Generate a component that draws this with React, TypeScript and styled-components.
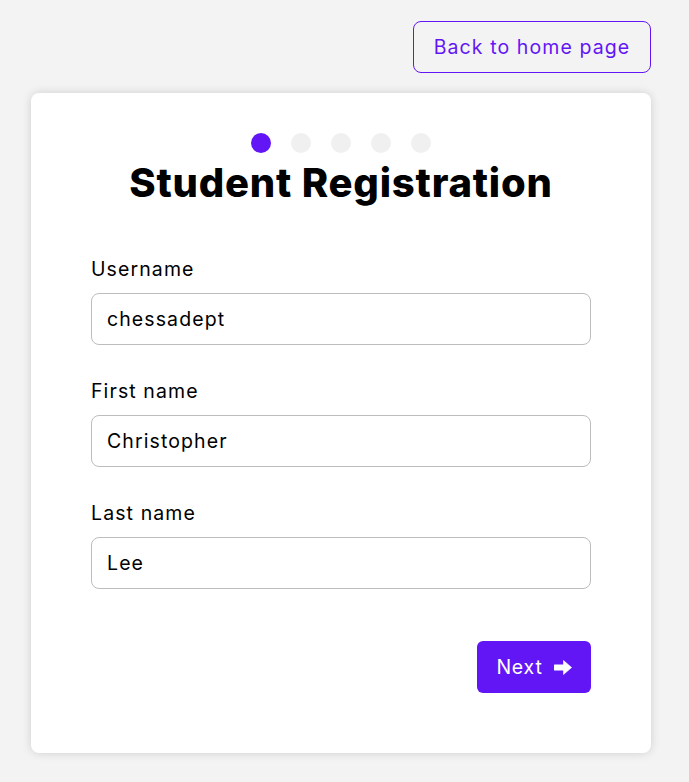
import { useState } from 'react'
import styled, { createGlobalStyle } from 'styled-components'

const GlobalStyle = createGlobalStyle`
  html, body {
    margin: 0;
    padding: 0;
    background: #f3f3f3;
    font-family: 'Inter', 'Noto Sans', sans-serif;
  }
  * { box-sizing: border-box; }
`

const fields = [
  { id: 'username', label: 'Username', value: 'chessadept' },
  { id: 'firstName', label: 'First name', value: 'Christopher' },
  { id: 'lastName', label: 'Last name', value: 'Lee' }
]

const ArrowIcon = () => (
  <svg width='18' height='15' viewBox='0 0 18 15' fill='currentColor'>
    <rect x='0' y='4.5' width='10.5' height='6' rx='0.5' />
    <path d='M9.5 0.5 L17.6 7.5 L9.5 14.5 Z' strokeLinejoin='round' stroke='currentColor' strokeWidth='0.6' />
  </svg>
)

export default function App() {
  const [values, setValues] = useState<Record<string, string>>(
    Object.fromEntries(fields.map(f => [f.id, f.value]))
  )
  const step = 0

  return (
    <Page>
      <GlobalStyle />
      <TopBar>
        <BackButton>Back to home page</BackButton>
      </TopBar>
      <Card>
        <Dots>
          {[0, 1, 2, 3, 4].map(i => (
            <Dot key={i} $active={i === step} />
          ))}
        </Dots>
        <Title>Student Registration</Title>
        <Form>
          {fields.map(f => (
            <Field key={f.id}>
              <Label htmlFor={f.id}>{f.label}</Label>
              <Input
                id={f.id}
                value={values[f.id]}
                onChange={e => setValues({ ...values, [f.id]: e.target.value })}
              />
            </Field>
          ))}
        </Form>
        <Actions>
          <NextButton>
            Next <ArrowIcon />
          </NextButton>
        </Actions>
      </Card>
    </Page>
  )
}

const Page = styled.div`
  width: 689px;
  min-height: 782px;
  padding: 21px 38px 29px 31px;
  display: flex;
  flex-direction: column;
  gap: 20px;
`

const TopBar = styled.div`
  display: flex;
  justify-content: flex-end;
`

const BackButton = styled.button`
  height: 52px;
  width: 238px;
  padding: 0;
  border: 1px solid #6316f5;
  border-radius: 8px;
  background: transparent;
  color: #6316f5;
  font-family: inherit;
  font-size: 19.5px;
  letter-spacing: 1.1px;
  cursor: pointer;
`

const Card = styled.div`
  background: #fff;
  border-radius: 8px;
  box-shadow: 0 0 10px rgba(0, 0, 0, 0.15);
  padding: 40px 60px 60px;
  display: flex;
  flex-direction: column;
`

const Dots = styled.div`
  display: flex;
  justify-content: center;
  gap: 20px;
`

const Dot = styled.span<{ $active: boolean }>`
  width: 20px;
  height: 20px;
  border-radius: 50%;
  background: ${p => (p.$active ? '#6316f5' : '#f0f0f0')};
`

const Title = styled.h1`
  margin: 2px 0 0;
  text-align: center;
  font-size: 40px;
  font-weight: 800;
  line-height: 56px;
  letter-spacing: 0.8px;
  color: #000;
`

const Form = styled.div`
  margin-top: 43px;
  display: flex;
  flex-direction: column;
  gap: 31px;
`

const Field = styled.div`
  display: flex;
  flex-direction: column;
  gap: 9px;
`

const Label = styled.label`
  font-size: 19.5px;
  line-height: 30px;
  letter-spacing: 1.1px;
  color: #000;
`

const Input = styled.input`
  height: 52px;
  width: 100%;
  border: 1px solid #bdbdbd;
  border-radius: 8px;
  padding: 0 15px;
  font-family: inherit;
  font-size: 19.5px;
  letter-spacing: 1.1px;
  color: #000;
  outline: none;
`

const Actions = styled.div`
  margin-top: 52px;
  display: flex;
  justify-content: flex-end;
`

const NextButton = styled.button`
  height: 52px;
  width: 114px;
  padding: 0;
  border: none;
  border-radius: 6px;
  background: #6316f5;
  color: #fff;
  font-family: inherit;
  font-size: 19.5px;
  letter-spacing: 0.8px;
  display: flex;
  align-items: center;
  justify-content: center;
  gap: 11px;
  cursor: pointer;
`
